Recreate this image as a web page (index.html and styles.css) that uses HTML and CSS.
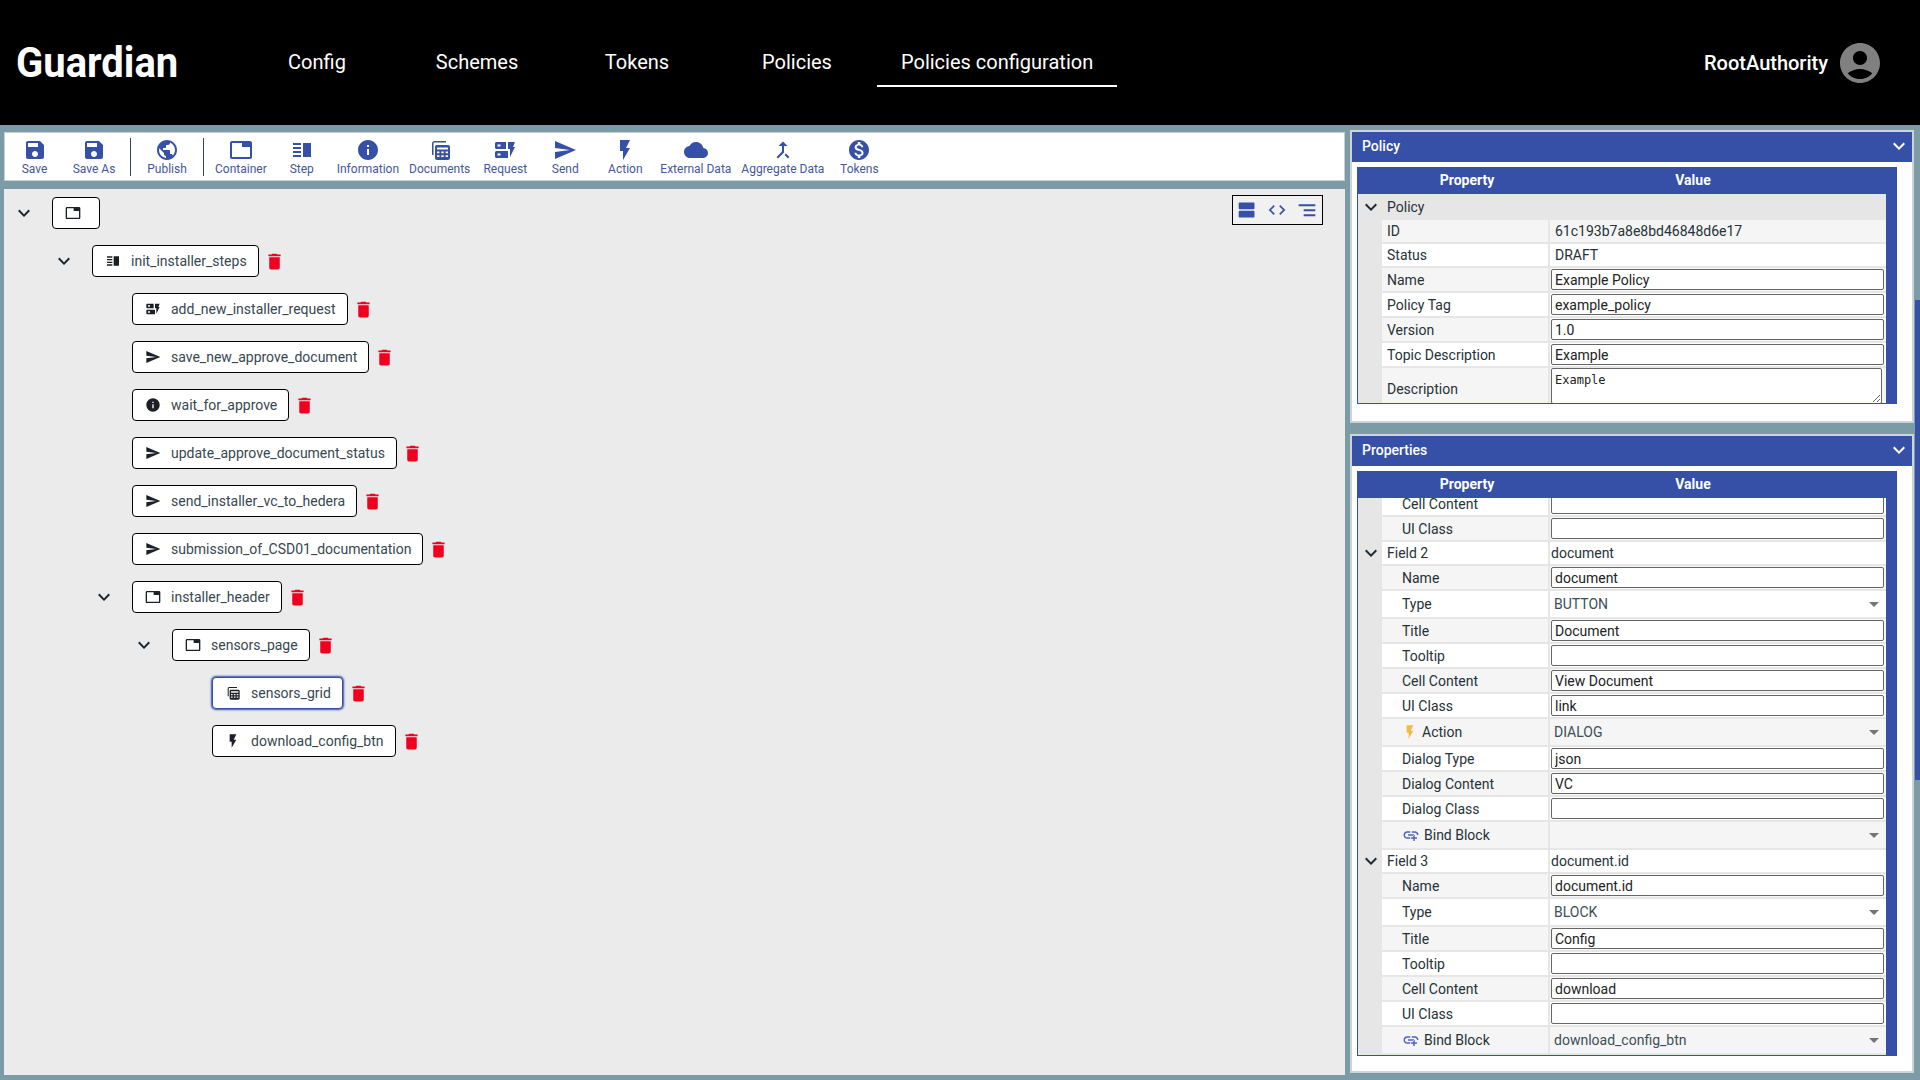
FILE: index.html
```html
<!DOCTYPE html>
<html lang="en">
<head>
    <meta charset="UTF-8">
    <meta name="viewport" content="width=device-width, initial-scale=1.0">
    <title>Guardian - Policies configuration</title>
    <link rel="stylesheet" href="styles.css">
</head>
<body>
    <!-- icon set -->
    <svg class="icon-defs" xmlns="http://www.w3.org/2000/svg">
        <symbol id="i-save" viewBox="0 0 24 24"><path d="M17 3H5c-1.11 0-2 .9-2 2v14c0 1.1.89 2 2 2h14c1.1 0 2-.9 2-2V7l-4-4zm-5 16c-1.66 0-3-1.34-3-3s1.34-3 3-3 3 1.34 3 3-1.34 3-3 3zm3-10H5V5h10v4z"/></symbol>
        <symbol id="i-public" viewBox="0 0 24 24"><path d="M12 2C6.48 2 2 6.48 2 12s4.48 10 10 10 10-4.48 10-10S17.52 2 12 2zm-1 17.93c-3.95-.49-7-3.85-7-7.93 0-.62.08-1.21.21-1.79L9 15v1c0 1.1.9 2 2 2v1.93zm6.9-2.54c-.26-.81-1-1.39-1.9-1.39h-1v-3c0-.55-.45-1-1-1H8v-2h2c.55 0 1-.45 1-1V7h2c1.1 0 2-.9 2-2v-.41c2.93 1.19 5 4.06 5 7.41 0 2.08-.8 3.97-2.1 5.39z"/></symbol>
        <symbol id="i-tab" viewBox="0 0 24 24"><path d="M21 3H3c-1.1 0-2 .9-2 2v14c0 1.1.9 2 2 2h18c1.1 0 2-.9 2-2V5c0-1.1-.9-2-2-2zm0 16H3V5h10v4h8v10z"/></symbol>
        <symbol id="i-step" viewBox="0 0 24 24"><path d="M3 15h8v-2H3v2zm0 4h8v-2H3v2zm0-8h8V9H3v2zm0-6v2h8V5H3zm10 0h8v14h-8V5z"/></symbol>
        <symbol id="i-info" viewBox="0 0 24 24"><path d="M12 2C6.48 2 2 6.48 2 12s4.48 10 10 10 10-4.48 10-10S17.52 2 12 2zm1 15h-2v-6h2v6zm0-8h-2V7h2v2z"/></symbol>
        <symbol id="i-grid" viewBox="0 0 24 24">
            <path d="M4 5.500c0-1.400 1.100-2.500 2.500-2.500H18v1.500H6.500c-.6 0-1 .4-1 1V17H4z"/>
            <path fill-rule="evenodd" d="M9 7h11c1.100 0 2 .9 2 2v11c0 1.100-.9 2-2 2H9c-1.100 0-2-.9-2-2V9c0-1.100.9-2 2-2zm0 2.500v2h11v-2zm0 4v1.800h2.400v-1.800zm4.300 0v1.800h2.400v-1.800zm4.300 0v1.800H20v-1.800zM9 17.300v1.800h2.400v-1.800zm4.300 0v1.800h2.400v-1.800zm4.300 0v1.800H20v-1.800z"/>
        </symbol>
        <symbol id="i-request" viewBox="0 0 24 24">
            <path fill-rule="evenodd" d="M3.500 4H13v7H3.500C2.700 11 2 10.300 2 9.500v-4C2 4.700 2.700 4 3.500 4zm1 2.500v2h3v-2zM3.500 13H15v7H3.500C2.700 20 2 19.300 2 18.500v-4c0-.8.700-1.500 1.500-1.500zm1 2.500v2h3v-2z"/>
            <path d="M15 4h7l-2 5h2l-5 10v-8h-2z"/>
        </symbol>
        <symbol id="i-send" viewBox="0 0 24 24"><path d="M2.010 21L23 12 2.010 3 2 10l15 2-15 2z"/></symbol>
        <symbol id="i-bolt" viewBox="0 0 24 24"><path d="M7 2v11h3v9l7-12h-4l4-8z"/></symbol>
        <symbol id="i-cloud" viewBox="0 0 24 24"><path d="M19.350 10.040C18.670 6.590 15.640 4 12 4 9.110 4 6.600 5.640 5.350 8.040 2.340 8.360 0 10.910 0 14c0 3.310 2.690 6 6 6h13c2.760 0 5-2.240 5-5 0-2.640-2.050-4.780-4.650-4.960z"/></symbol>
        <symbol id="i-merge" viewBox="0 0 24 24"><path d="M17 20.410L18.410 19 15 15.590 13.590 17 17 20.410zM7.500 8H11v5.590L5.590 19 7 20.410l6-6V8h3.500L12 3.500 7.500 8z"/></symbol>
        <symbol id="i-token" viewBox="0 0 24 24"><path d="M12 2C6.480 2 2 6.480 2 12s4.480 10 10 10 10-4.480 10-10S17.520 2 12 2zm1.410 16.090V20h-2.670v-1.930c-1.710-.36-3.160-1.460-3.270-3.400h1.960c.1 1.050.82 1.870 2.650 1.870 1.960 0 2.400-.98 2.400-1.590 0-.83-.44-1.610-2.670-2.140-2.480-.6-4.180-1.620-4.180-3.670 0-1.720 1.390-2.840 3.110-3.210V4h2.670v1.950c1.860.45 2.790 1.860 2.870 3.390H14.300c-.05-1.110-.64-1.870-2.220-1.870-1.500 0-2.400.68-2.400 1.640 0 .84.65 1.390 2.670 1.910s4.180 1.390 4.180 3.910c-.01 1.830-1.380 2.830-3.120 3.160z"/></symbol>
        <symbol id="i-chevron" viewBox="0 0 24 24"><path d="M16.590 8.590L12 13.170 7.410 8.590 6 10l6 6 6-6z"/></symbol>
        <symbol id="i-trash" viewBox="0 0 24 24"><path d="M6 19c0 1.100.9 2 2 2h8c1.100 0 2-.9 2-2V7H6v12zM19 4h-3.500l-1-1h-5l-1 1H5v2h14V4z"/></symbol>
        <symbol id="i-link" viewBox="0 0 24 24"><path d="M8 11h8v2H8zm12.100 1H22c0-2.760-2.240-5-5-5h-4v1.900h4c1.710 0 3.100 1.390 3.100 3.100zM3.900 12c0-1.710 1.390-3.100 3.100-3.100h4V7H7c-2.760 0-5 2.240-5 5s2.240 5 5 5h4v-1.900H7c-1.710 0-3.100-1.390-3.100-3.100zM17 12h-2v3h-3v2h3v3h2v-3h3v-2h-3z"/></symbol>
        <symbol id="i-agenda" viewBox="0 0 24 24"><path d="M20 13H3c-.55 0-1 .45-1 1v6c0 .55.45 1 1 1h17c.55 0 1-.45 1-1v-6c0-.55-.45-1-1-1zm0-10H3c-.55 0-1 .45-1 1v6c0 .55.45 1 1 1h17c.55 0 1-.45 1-1V4c0-.55-.45-1-1-1z"/></symbol>
        <symbol id="i-code" viewBox="0 0 24 24"><path d="M9.400 16.600L4.800 12l4.600-4.600L8 6l-6 6 6 6 1.400-1.400zm5.200 0l4.600-4.600-4.600-4.600L16 6l6 6-6 6-1.400-1.400z"/></symbol>
        <symbol id="i-sort" viewBox="0 0 24 24"><path d="M2 5h20v2.500H2zM8 11h14v2.500H8zM8 17h14v2.500H8z"/></symbol>
        <symbol id="i-account" viewBox="0 0 24 24"><path d="M12 2C6.480 2 2 6.480 2 12s4.480 10 10 10 10-4.480 10-10S17.520 2 12 2zm0 4c1.930 0 3.500 1.570 3.500 3.500S13.930 13 12 13s-3.500-1.570-3.500-3.500S10.070 6 12 6zm0 14c-2.030 0-4.430-.82-6.140-2.880C7.550 15.800 9.680 15 12 15s4.450.8 6.140 2.120C16.430 19.180 14.030 20 12 20z"/></symbol>
    </svg>

    <header class="top-bar">
        <div class="logo-box"><div class="logo">Guardian</div></div>
        <nav class="nav">
            <a class="nav-item">Config</a>
            <a class="nav-item">Schemes</a>
            <a class="nav-item">Tokens</a>
            <a class="nav-item">Policies</a>
            <a class="nav-item active">Policies configuration</a>
        </nav>
        <div class="user">
            <span class="user-name">RootAuthority</span>
            <svg class="user-icon"><use href="#i-account"/></svg>
        </div>
    </header>

    <main class="workspace">
        <section class="editor">
            <div class="toolbar">
                <div class="tool"><svg><use href="#i-save"/></svg><span>Save</span></div>
                <div class="tool"><svg><use href="#i-save"/></svg><span>Save As</span></div>
                <div class="tool-sep"></div>
                <div class="tool"><svg><use href="#i-public"/></svg><span>Publish</span></div>
                <div class="tool-sep"></div>
                <div class="tool"><svg><use href="#i-tab"/></svg><span>Container</span></div>
                <div class="tool"><svg><use href="#i-step"/></svg><span>Step</span></div>
                <div class="tool"><svg><use href="#i-info"/></svg><span>Information</span></div>
                <div class="tool"><svg><use href="#i-grid"/></svg><span>Documents</span></div>
                <div class="tool"><svg><use href="#i-request"/></svg><span>Request</span></div>
                <div class="tool"><svg><use href="#i-send"/></svg><span>Send</span></div>
                <div class="tool"><svg><use href="#i-bolt"/></svg><span>Action</span></div>
                <div class="tool"><svg><use href="#i-cloud"/></svg><span>External Data</span></div>
                <div class="tool"><svg><use href="#i-merge"/></svg><span>Aggregate Data</span></div>
                <div class="tool"><svg><use href="#i-token"/></svg><span>Tokens</span></div>
            </div>

            <div class="canvas">
                <div class="view-switch">
                    <svg><use href="#i-agenda"/></svg>
                    <svg><use href="#i-code"/></svg>
                    <svg><use href="#i-sort"/></svg>
                </div>

                <div class="tree-row">
                    <span class="toggle"><svg><use href="#i-chevron"/></svg></span>
                    <div class="node"><svg><use href="#i-tab"/></svg></div>
                </div>
                <div class="children">
                    <div class="tree-row">
                        <span class="toggle"><svg><use href="#i-chevron"/></svg></span>
                        <div class="node"><svg><use href="#i-step"/></svg><span>init_installer_steps</span></div>
                        <svg class="trash"><use href="#i-trash"/></svg>
                    </div>
                    <div class="children">
                        <div class="tree-row">
                            <span class="toggle"></span>
                            <div class="node"><svg><use href="#i-request"/></svg><span>add_new_installer_request</span></div>
                            <svg class="trash"><use href="#i-trash"/></svg>
                        </div>
                        <div class="tree-row">
                            <span class="toggle"></span>
                            <div class="node"><svg><use href="#i-send"/></svg><span>save_new_approve_document</span></div>
                            <svg class="trash"><use href="#i-trash"/></svg>
                        </div>
                        <div class="tree-row">
                            <span class="toggle"></span>
                            <div class="node"><svg><use href="#i-info"/></svg><span>wait_for_approve</span></div>
                            <svg class="trash"><use href="#i-trash"/></svg>
                        </div>
                        <div class="tree-row">
                            <span class="toggle"></span>
                            <div class="node"><svg><use href="#i-send"/></svg><span>update_approve_document_status</span></div>
                            <svg class="trash"><use href="#i-trash"/></svg>
                        </div>
                        <div class="tree-row">
                            <span class="toggle"></span>
                            <div class="node"><svg><use href="#i-send"/></svg><span>send_installer_vc_to_hedera</span></div>
                            <svg class="trash"><use href="#i-trash"/></svg>
                        </div>
                        <div class="tree-row">
                            <span class="toggle"></span>
                            <div class="node"><svg><use href="#i-send"/></svg><span>submission_of_CSD01_documentation</span></div>
                            <svg class="trash"><use href="#i-trash"/></svg>
                        </div>
                        <div class="tree-row">
                            <span class="toggle"><svg><use href="#i-chevron"/></svg></span>
                            <div class="node"><svg><use href="#i-tab"/></svg><span>installer_header</span></div>
                            <svg class="trash"><use href="#i-trash"/></svg>
                        </div>
                        <div class="children">
                            <div class="tree-row">
                                <span class="toggle"><svg><use href="#i-chevron"/></svg></span>
                                <div class="node"><svg><use href="#i-tab"/></svg><span>sensors_page</span></div>
                                <svg class="trash"><use href="#i-trash"/></svg>
                            </div>
                            <div class="children">
                                <div class="tree-row">
                                    <span class="toggle"></span>
                                    <div class="node selected"><svg><use href="#i-grid"/></svg><span>sensors_grid</span></div>
                                    <svg class="trash"><use href="#i-trash"/></svg>
                                </div>
                                <div class="tree-row">
                                    <span class="toggle"></span>
                                    <div class="node"><svg><use href="#i-bolt"/></svg><span>download_config_btn</span></div>
                                    <svg class="trash"><use href="#i-trash"/></svg>
                                </div>
                            </div>
                        </div>
                    </div>
                </div>
            </div>
        </section>

        <aside class="side">
            <div class="panel panel-policy">
                <div class="panel-head">
                    <span>Policy</span>
                    <svg><use href="#i-chevron"/></svg>
                </div>
                <div class="grid-table">
                    <div class="grid-head"><span class="head-prop">Property</span><span class="head-val">Value</span></div>
                    <div class="grid-body">
                        <div class="rows">
                            <div class="row row-group">
                                <span class="gutter"><svg><use href="#i-chevron"/></svg></span>
                                <div class="name">Policy</div>
                            </div>
                            <div class="row row-text shade"><span class="gutter"></span><div class="name">ID</div><div class="value text-pad">61c193b7a8e8bd46848d6e17</div></div>
                            <div class="row row-text"><span class="gutter"></span><div class="name">Status</div><div class="value text-pad">DRAFT</div></div>
                            <div class="row shade"><span class="gutter"></span><div class="name">Name</div><div class="value"><input value="Example Policy"></div></div>
                            <div class="row"><span class="gutter"></span><div class="name">Policy Tag</div><div class="value"><input value="example_policy"></div></div>
                            <div class="row shade"><span class="gutter"></span><div class="name">Version</div><div class="value"><input value="1.0"></div></div>
                            <div class="row"><span class="gutter"></span><div class="name">Topic Description</div><div class="value"><input value="Example"></div></div>
                            <div class="row row-area shade"><span class="gutter"></span><div class="name">Description</div><div class="value"><textarea>Example</textarea></div></div>
                        </div>
                        <div class="bar"></div>
                    </div>
                </div>
            </div>

            <div class="panel panel-props">
                <div class="panel-head">
                    <span>Properties</span>
                    <svg><use href="#i-chevron"/></svg>
                </div>
                <div class="grid-table">
                    <div class="grid-head"><span class="head-prop">Property</span><span class="head-val">Value</span></div>
                    <div class="grid-body">
                        <div class="rows rows-scrolled">
                            <div class="row"><span class="gutter"></span><div class="name sub">Cell Content</div><div class="value"><input value=""></div></div>
                            <div class="row shade"><span class="gutter"></span><div class="name sub">UI Class</div><div class="value"><input value=""></div></div>
                            <div class="row row-text"><span class="gutter"><svg><use href="#i-chevron"/></svg></span><div class="name">Field 2</div><div class="value">document</div></div>
                            <div class="row shade"><span class="gutter"></span><div class="name sub">Name</div><div class="value"><input value="document"></div></div>
                            <div class="row row-select"><span class="gutter"></span><div class="name sub">Type</div><div class="value select">BUTTON<i class="caret"></i></div></div>
                            <div class="row shade"><span class="gutter"></span><div class="name sub">Title</div><div class="value"><input value="Document"></div></div>
                            <div class="row"><span class="gutter"></span><div class="name sub">Tooltip</div><div class="value"><input value=""></div></div>
                            <div class="row shade"><span class="gutter"></span><div class="name sub">Cell Content</div><div class="value"><input value="View Document"></div></div>
                            <div class="row"><span class="gutter"></span><div class="name sub">UI Class</div><div class="value"><input value="link"></div></div>
                            <div class="row row-select shade"><span class="gutter"></span><div class="name sub"><svg class="mark-bolt"><use href="#i-bolt"/></svg>Action</div><div class="value select">DIALOG<i class="caret"></i></div></div>
                            <div class="row"><span class="gutter"></span><div class="name sub">Dialog Type</div><div class="value"><input value="json"></div></div>
                            <div class="row shade"><span class="gutter"></span><div class="name sub">Dialog Content</div><div class="value"><input value="VC"></div></div>
                            <div class="row"><span class="gutter"></span><div class="name sub">Dialog Class</div><div class="value"><input value=""></div></div>
                            <div class="row row-select shade"><span class="gutter"></span><div class="name sub"><svg class="mark-link"><use href="#i-link"/></svg>Bind Block</div><div class="value select"><i class="caret"></i></div></div>
                            <div class="row row-text"><span class="gutter"><svg><use href="#i-chevron"/></svg></span><div class="name">Field 3</div><div class="value">document.id</div></div>
                            <div class="row shade"><span class="gutter"></span><div class="name sub">Name</div><div class="value"><input value="document.id"></div></div>
                            <div class="row row-select"><span class="gutter"></span><div class="name sub">Type</div><div class="value select">BLOCK<i class="caret"></i></div></div>
                            <div class="row shade"><span class="gutter"></span><div class="name sub">Title</div><div class="value"><input value="Config"></div></div>
                            <div class="row"><span class="gutter"></span><div class="name sub">Tooltip</div><div class="value"><input value=""></div></div>
                            <div class="row shade"><span class="gutter"></span><div class="name sub">Cell Content</div><div class="value"><input value="download"></div></div>
                            <div class="row"><span class="gutter"></span><div class="name sub">UI Class</div><div class="value"><input value=""></div></div>
                            <div class="row row-select shade"><span class="gutter"></span><div class="name sub"><svg class="mark-link"><use href="#i-link"/></svg>Bind Block</div><div class="value select">download_config_btn<i class="caret"></i></div></div>
                        </div>
                        <div class="bar"></div>
                    </div>
                </div>
            </div>

            <div class="side-thumb"></div>
        </aside>
    </main>
</body>
</html>
```

FILE: styles.css
```css
* {
    box-sizing: border-box;
}

body {
    margin: 0;
    height: 1080px;
    overflow: hidden;
    background-color: #7b9ba6;
    font-family: Roboto, "Liberation Sans", sans-serif;
    font-size: 14px;
    color: #263238;
}

.icon-defs {
    display: none;
}

svg {
    fill: currentColor;
    flex-shrink: 0;
}

/* Top bar */
.top-bar {
    display: flex;
    align-items: center;
    height: 125px;
    padding: 0 36px 0 16px;
    background: #000;
    color: #fff;
}

.logo-box {
    width: 221px;
    padding-bottom: 2px;
}

.logo {
    font-size: 43px;
    font-weight: 700;
    transform: scaleX(0.93);
    transform-origin: left center;
}

.nav {
    display: flex;
}

.nav-item {
    min-width: 160px;
    height: 49px;
    padding: 0 24px;
    line-height: 48px;
    text-align: center;
    font-size: 20px;
}

.nav-item.active {
    border-bottom: 2px solid #fff;
}

.user {
    display: flex;
    align-items: center;
    gap: 8px;
    margin-left: auto;
}

.user-name {
    font-size: 20px;
    font-weight: 500;
}

.user-icon {
    width: 48px;
    height: 48px;
    color: #808080;
}

/* Page columns */
.workspace {
    display: flex;
    gap: 5px;
    padding: 5px 0 0 4px;
}

.editor {
    width: 1341px;
    padding-top: 2px;
}

/* Toolbar */
.toolbar {
    display: flex;
    align-items: center;
    height: 49px;
    background: #fff;
    border: 1px solid #c9d0d2;
}

.tool {
    display: flex;
    flex-direction: column;
    align-items: center;
    min-width: 60px;
    padding: 0 5px;
    color: #3650a8;
}

.tool:first-child {
    min-width: 59px;
}

.tool svg {
    width: 24px;
    height: 24px;
}

.tool span {
    font-size: 12px;
    line-height: 14px;
    color: #44569f;
    white-space: nowrap;
}

.tool-sep {
    width: 1px;
    height: 38px;
    margin: 0 6px;
    background: #33406f;
}

/* Block tree */
.canvas {
    position: relative;
    height: 886px;
    margin-top: 8px;
    padding: 8px 0 0 8px;
    background: #ebebeb;
}

.view-switch {
    position: absolute;
    top: 6px;
    right: 22px;
    display: flex;
    align-items: center;
    gap: 10px;
    height: 30px;
    padding: 0 5px 0 4px;
    background: #f1f1f1;
    border: 1px solid #000;
    color: #3650a8;
}

.view-switch svg {
    width: 20px;
    height: 20px;
}

.children {
    padding-left: 40px;
}

.tree-row {
    display: flex;
    align-items: center;
    height: 32px;
    margin-bottom: 16px;
}

.toggle {
    display: flex;
    width: 40px;
    color: #1f2a33;
}

.toggle svg {
    width: 24px;
    height: 24px;
}

.node {
    display: flex;
    align-items: center;
    gap: 10px;
    min-width: 48px;
    height: 32px;
    padding: 0 11px 0 12px;
    background: #fff;
    border: 1px solid #000;
    border-radius: 4px;
    color: #37474f;
    white-space: nowrap;
}

.node svg {
    width: 16px;
    height: 16px;
    color: #1c1f26;
}

.node.selected {
    border: 1px solid #3650a8;
    box-shadow: 0 0 2px 1px #3650a8;
}

.trash {
    width: 21px;
    height: 21px;
    margin-left: 5px;
    color: #f0001e;
}

/* Right column */
.side {
    width: 570px;
    padding-right: 6px;
}

.panel {
    background: #fff;
    border: 2px solid #ced4d6;
}

.panel-policy {
    height: 293px;
}

.panel-props {
    height: 639px;
    margin-top: 11px;
}

.panel-head {
    display: flex;
    align-items: center;
    justify-content: space-between;
    height: 30px;
    padding: 0 1px 2px 10px;
    background: #3650a8;
    color: #fff;
    font-weight: 500;
}

.panel-head svg {
    width: 24px;
    height: 24px;
}

.grid-table {
    display: flex;
    flex-direction: column;
    width: 540px;
    margin: 5px 0 0 5px;
    border: 1px solid #3650a8;
    border-top: 0;
}

.panel-policy .grid-table {
    height: 237px;
}

.panel-props .grid-table {
    height: 585px;
}

.grid-head {
    display: flex;
    align-items: center;
    flex-shrink: 0;
    height: 27px;
    padding-bottom: 1px;
    background: #3650a8;
    color: #fff;
    font-weight: 700;
    text-align: center;
}

.head-prop {
    width: 218px;
}

.head-val {
    width: 234px;
}

.grid-body {
    display: flex;
    flex: 1;
    min-height: 0;
    overflow: hidden;
}

.rows {
    flex: 1;
    min-width: 0;
    background: #e6e6e6;
    overflow: hidden;
}

.rows-scrolled .row:first-child {
    margin-top: -6px;
}

.bar {
    flex-shrink: 0;
    width: 10px;
    background: #3650a8;
}

.row {
    display: flex;
    height: 23px;
    margin-bottom: 2px;
}

.row-text {
    height: 22px;
}

.row-select {
    height: 26px;
}

.row-group {
    height: 26px;
    margin-bottom: 0;
}

.row-area {
    height: 42px;
}

.gutter {
    display: flex;
    align-items: center;
    flex-shrink: 0;
    width: 24px;
    color: #1f2a33;
}

.gutter svg {
    width: 24px;
    height: 24px;
    margin-left: 1px;
}

.name,
.value {
    display: flex;
    align-items: center;
    background: #fff;
    color: #263238;
}

.name {
    width: 166px;
    margin-right: 2px;
    padding-left: 5px;
}

.value {
    width: 336px;
    padding: 0 2px 0 1px;
    white-space: nowrap;
}

.row.shade .name,
.row.shade .value {
    background: #f5f5f5;
}

.row-group .name {
    background: transparent;
}

.name.sub {
    padding-left: 20px;
}

.text-pad {
    padding-left: 5px;
}

.select {
    position: relative;
    padding-left: 4px;
    color: #3c4f58;
}

.caret {
    position: absolute;
    right: 7px;
    top: 50%;
    margin-top: -2px;
    border-left: 5px solid transparent;
    border-right: 5px solid transparent;
    border-top: 5px solid #757575;
}

input {
    width: 100%;
    height: 21px;
    padding: 0 3px;
    border: 1px solid #666;
    border-radius: 2px;
    background: #fff;
    font-family: Roboto, "Liberation Sans", sans-serif;
    font-size: 14px;
    color: #222;
}

textarea {
    display: block;
    width: 331px;
    height: 36px;
    margin-bottom: 5px;
    padding: 4px 3px 0;
    border: 1px solid #666;
    border-radius: 2px;
    background: #fff;
    font-family: "DejaVu Sans Mono", monospace;
    font-size: 12px;
    color: #222;
    align-self: flex-start;
}

.mark-bolt {
    width: 16px;
    height: 18px;
    margin-right: 4px;
    color: #f5b942;
}

.mark-link {
    width: 18px;
    height: 18px;
    margin-right: 4px;
    color: #4d63c4;
}

.side-thumb {
    position: absolute;
    top: 300px;
    right: 0;
    width: 5px;
    height: 480px;
    background: #3650a8;
}
```
